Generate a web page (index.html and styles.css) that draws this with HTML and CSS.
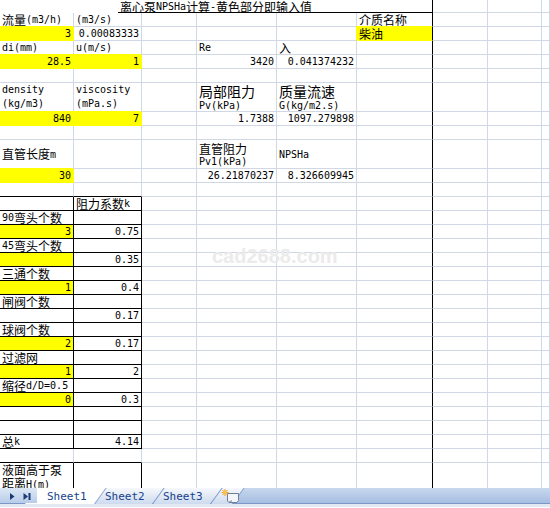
FILE: index.html
```html
<!DOCTYPE html>
<html lang="zh-CN">
<head>
<meta charset="utf-8">
<title>离心泵NPSHa计算</title>
<link rel="stylesheet" href="styles.css">
</head>
<body>
<div class="page">
  <div class="sheet">
    <div class="title"><span class="k">离心泵</span>NPSHa<span class="k">计算</span>-<span class="k">黄色部分即输入值</span></div><div></div><div></div><div></div>
    <div><span class="k">流量</span>(m3/h)</div><div>(m3/s)</div><div></div><div></div><div></div><div><span class="k">介质名称</span></div><div></div><div></div><div></div>
    <div class="y n">3</div><div class="n">0.00083333</div><div></div><div></div><div></div><div class="y"><span class="k">柴油</span></div><div></div><div></div><div></div>
    <div>di(mm)</div><div>u(m/s)</div><div></div><div>Re</div><div><span class="k">入</span></div><div></div><div></div><div></div><div></div>
    <div class="y n">28.5</div><div class="y n">1</div><div></div><div class="n">3420</div><div class="n">0.041374232</div><div></div><div></div><div></div><div></div>
    <div></div><div></div><div></div><div></div><div></div><div></div><div></div><div></div><div></div>
    <div class="w"><span>density</span><span>(kg/m3)</span></div><div class="w"><span>viscosity</span><span>(mPa.s)</span></div><div></div><div class="w big"><span class="k">局部阻力</span><span>Pv(kPa)</span></div><div class="w big"><span class="k">质量流速</span><span>G(kg/m2.s)</span></div><div></div><div></div><div></div><div></div>
    <div class="y n">840</div><div class="y n">7</div><div></div><div class="n">1.7388</div><div class="n">1097.279898</div><div></div><div></div><div></div><div></div>
    <div></div><div></div><div></div><div></div><div></div><div></div><div></div><div></div><div></div>
    <div class="m"><span class="k">直管长度</span>m</div><div></div><div></div><div class="w pv1"><span class="k">直管阻力</span><span>Pv1(kPa)</span></div><div class="m">NPSHa</div><div></div><div></div><div></div><div></div>
    <div class="y n">30</div><div></div><div></div><div class="n">26.21870237</div><div class="n">8.326609945</div><div></div><div></div><div></div><div></div>
    <div class="bb"></div><div class="bb"></div><div></div><div></div><div></div><div></div><div></div><div></div><div></div>
    <div class="bk"></div><div class="bk"><span class="k">阻力系数</span>k</div><div></div><div></div><div></div><div></div><div></div><div></div><div></div>
    <div class="bk">90<span class="k">弯头个数</span></div><div class="bk"></div><div></div><div></div><div></div><div></div><div></div><div></div><div></div>
    <div class="bk yt n">3</div><div class="bk n">0.75</div><div></div><div></div><div></div><div></div><div></div><div></div><div></div>
    <div class="bk">45<span class="k">弯头个数</span></div><div class="bk"></div><div></div><div></div><div></div><div></div><div></div><div></div><div></div>
    <div class="bk yt"></div><div class="bk n">0.35</div><div></div><div></div><div></div><div></div><div></div><div></div><div></div>
    <div class="bk"><span class="k">三通个数</span></div><div class="bk"></div><div></div><div></div><div></div><div></div><div></div><div></div><div></div>
    <div class="bk yt n">1</div><div class="bk n">0.4</div><div></div><div></div><div></div><div></div><div></div><div></div><div></div>
    <div class="bk"><span class="k">闸阀个数</span></div><div class="bk"></div><div></div><div></div><div></div><div></div><div></div><div></div><div></div>
    <div class="bk"></div><div class="bk n">0.17</div><div></div><div></div><div></div><div></div><div></div><div></div><div></div>
    <div class="bk"><span class="k">球阀个数</span></div><div class="bk"></div><div></div><div></div><div></div><div></div><div></div><div></div><div></div>
    <div class="bk yt n">2</div><div class="bk n">0.17</div><div></div><div></div><div></div><div></div><div></div><div></div><div></div>
    <div class="bk"><span class="k">过滤网</span></div><div class="bk"></div><div></div><div></div><div></div><div></div><div></div><div></div><div></div>
    <div class="bk yt n">1</div><div class="bk n">2</div><div></div><div></div><div></div><div></div><div></div><div></div><div></div>
    <div class="bk"><span class="k">缩径</span>d/D=0.5</div><div class="bk"></div><div></div><div></div><div></div><div></div><div></div><div></div><div></div>
    <div class="bk yt n">0</div><div class="bk n">0.3</div><div></div><div></div><div></div><div></div><div></div><div></div><div></div>
    <div class="bk"></div><div class="bk"></div><div></div><div></div><div></div><div></div><div></div><div></div><div></div>
    <div class="bk"></div><div class="bk"></div><div></div><div></div><div></div><div></div><div></div><div></div><div></div>
    <div class="bk"><span class="k">总</span>k</div><div class="bk n">4.14</div><div></div><div></div><div></div><div></div><div></div><div></div><div></div>
    <div class="bb"></div><div class="bb"></div><div></div><div></div><div></div><div></div><div></div><div></div><div></div>
    <div class="br w top"><span class="k">液面高于泵</span><span><span class="k">距离</span>H(m)</span></div><div class="br"></div><div></div><div></div><div></div><div></div><div></div><div></div><div></div>
  </div>

  <div class="tabbar">
    <div class="nav">
      <svg width="37" height="16" viewBox="0 0 37 16">
        <path d="M10 5 L14.5 8.5 L10 12 Z" fill="#1d3c74"/>
        <path d="M23.5 5 L28 8.5 L23.5 12 Z" fill="#1d3c74"/>
        <rect x="28.5" y="5" width="2" height="7" fill="#1d3c74"/>
      </svg>
    </div>
    <div class="tab on">Sheet1</div>
    <div class="tab">Sheet2</div>
    <div class="tab">Sheet3</div>
    <div class="tab new">
      <svg width="18" height="16" viewBox="0 0 18 16">
        <path d="M5.5 5.5 H16.5 V12.5 L15 14.5 H7 L5.5 13 Z" fill="#f3f5f9" stroke="#6c7e98"/>
        <path d="M7 14.5 Q8 12.5 10 13" fill="none" stroke="#6c7e98"/>
        <g stroke="#f39a12" stroke-width="1">
          <line x1="3" y1="1" x2="3" y2="8"/>
          <line x1="-0.5" y1="4.5" x2="6.5" y2="4.5"/>
          <line x1="0.5" y1="2" x2="5.5" y2="7"/>
          <line x1="5.5" y1="2" x2="0.5" y2="7"/>
        </g>
        <circle cx="3" cy="4.5" r="1.8" fill="#fbc34a"/>
      </svg>
    </div>
  </div>
  <div class="status"></div>

  <div class="wm">cad2688.com</div>
</div>
</body>
</html>
```

FILE: styles.css
```css
* { box-sizing: border-box; }
html, body { margin: 0; padding: 0; background: #fff; }

.page {
  position: relative;
  width: 550px;
  height: 508px;
  overflow: hidden;
}

/* worksheet grid */
.sheet {
  display: grid;
  grid-template-columns: 74px 68px 55px 80px 80px 76px 55px 54px 8px;
  grid-template-rows: 13px repeat(5, 14px) 29px 14px 14px 29px repeat(21, 14px) 29px;
  height: 488px;
  overflow: hidden;
  font: 10px/13px "DejaVu Sans Mono", "Noto Sans CJK SC", monospace;
  color: #000;
}

.sheet > div {
  display: flex;
  align-items: flex-end;
  padding: 0 2px;
  border-right: 1px solid #d0d7e5;
  border-bottom: 1px solid #d0d7e5;
  white-space: nowrap;
  min-width: 0;
}

/* column F carries a black right border */
.sheet > div:nth-child(9n+10) { border-right-color: #000; }

.sheet > .title {
  grid-column: span 6;
  justify-content: center;
  border-right-color: #000;
  border-bottom: 0;
  background: linear-gradient(#000, #000) right bottom / 314px 1px no-repeat;
}

.k { font-family: "Noto Sans CJK SC", sans-serif; font-size: 12px; line-height: 12px; }

.sheet > .n { justify-content: flex-end; }

.sheet > .y {
  background: #ff0;
  border-color: #ff0;
  box-shadow: -1px -1px 0 #ff0;
}
.sheet > .yt { background: #ff0; }

.sheet > .bk { border-color: #000; }
.sheet > .bb { border-bottom-color: #000; }
.sheet > .br { border-right-color: #000; }

.sheet > .w {
  flex-direction: column;
  justify-content: flex-end;
  align-items: flex-start;
}
.sheet > .w > span { line-height: 14px; }
.sheet > .top { justify-content: flex-start; }
.sheet > .top > span { line-height: 14px; }

.sheet > .big > span:first-child { line-height: 17px; }
.sheet > .big > span:last-child { line-height: 11px; }
.big .k { font-size: 14px; line-height: 14px; }

.sheet > .pv1 > span:first-child { line-height: 15px; }
.sheet > .pv1 > span:last-child { line-height: 12px; }

.sheet > .m { align-items: center; }

/* sheet tabs */
.tabbar {
  display: flex;
  height: 16px;
  background: linear-gradient(#c8d8ee, #a6bee2);
  border-bottom: 1px solid #7a97c8;
}
.status { height: 3px; background: #e3e9f3; }

.nav {
  position: relative;
  z-index: 5;
  flex: none;
  width: 37px;
  background: linear-gradient(#dde8f6, #b8cce9);
}
.nav svg { display: block; }

.tab {
  position: relative;
  flex: none;
  width: 58px;
  height: 16px;
  padding-left: 10px;
  font: 11px/18px "DejaVu Sans Mono", monospace;
  color: #15428b;
}
.tab::before {
  content: "";
  position: absolute;
  inset: 0;
  z-index: -1;
  transform: skewX(-36deg);
  transform-origin: 0 100%;
  background: linear-gradient(#f6f8fc, #cddaef);
  border-right: 1px solid #7f9bc8;
}
.tab:nth-child(2) { z-index: 4; }
.tab:nth-child(3) { z-index: 3; }
.tab:nth-child(4) { z-index: 2; }
.tab:nth-child(5) { z-index: 1; }

.tab.on::before { left: -12px; background: #fff; }

.tab.new { width: 22px; padding-left: 11px; }
.tab.new svg { display: block; overflow: visible; }

/* watermark */
.wm {
  position: absolute;
  left: 212px;
  top: 246px;
  font: bold 20px/20px "Liberation Sans", Arial, sans-serif;
  color: #ebebeb;
  pointer-events: none;
}
```
